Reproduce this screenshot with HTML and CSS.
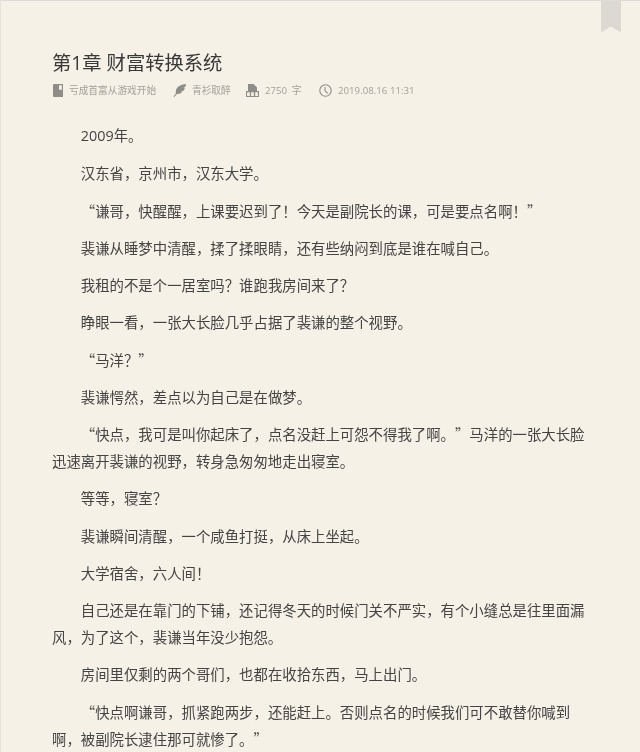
FILE: index.html
```html
<!DOCTYPE html>
<html lang="zh">
<head>
<meta charset="utf-8">
<title>第1章 财富转换系统</title>
<link rel="stylesheet" href="styles.css">
</head>
<body>
<main class="page">
  <svg class="bookmark" viewBox="0 0 20 32" aria-hidden="true"><path d="M0 0H20V32L10 26L0 32Z"/></svg>
  <h1 class="title">第1章 财富转换系统</h1>
  <div class="meta">
    <span class="meta-item meta-book">
      <svg class="icon" viewBox="0 0 10 13" aria-hidden="true"><path class="solid" fill-rule="evenodd" d="M1 0H10V13H1A1 1 0 0 1 0 12V1A1 1 0 0 1 1 0ZM6 1.2V5.8H8.8V1.2Z"/></svg>
      <span>亏成首富从游戏开始</span>
    </span>
    <span class="meta-item meta-author">
      <svg class="icon" viewBox="0 0 13 13" aria-hidden="true"><path class="solid" d="M13 0C8.5 .6 4.6 2 3.2 5.4C2.7 6.8 2.7 8.2 3 9.2L.4 12.5L1.2 13L3.9 9.9C5.6 10.2 7.6 9.7 9 8.3L7.5 7.9L10.1 7C11 6 11.5 5 11.9 3.8L10.2 3.8L12.4 2.7C12.7 1.9 12.9 1 13 0Z"/></svg>
      <span>青衫取醉</span>
    </span>
    <span class="meta-item meta-count">
      <svg class="icon" viewBox="0 0 13 13" aria-hidden="true"><path class="solid" fill-rule="evenodd" d="M2 0H7.6L11 3.4V7H13V13H0V7H2ZM1.1 8.3V11.9H3.8V8.3ZM5.1 8.3V11.9H7.8V8.3ZM9.2 8.3V11.9H11.9V8.3Z"/></svg>
      <span>2750 字</span>
    </span>
    <span class="meta-item">
      <svg class="icon" viewBox="0 0 13 13" aria-hidden="true"><g class="line"><circle cx="6.5" cy="6.5" r="5.7"/><path d="M6 3V6.8L8.8 9.4"/></g></svg>
      <span>2019.08.16 11:31</span>
    </span>
  </div>
  <article class="content">
    <p><span class="num">2009</span>年。</p>
    <p>汉东省，京州市，汉东大学。</p>
    <p>“谦哥，快醒醒，上课要迟到了！今天是副院长的课，可是要点名啊！”</p>
    <p>裴谦从睡梦中清醒，揉了揉眼睛，还有些纳闷到底是谁在喊自己。</p>
    <p>我租的不是个一居室吗？谁跑我房间来了？</p>
    <p>睁眼一看，一张大长脸几乎占据了裴谦的整个视野。</p>
    <p>“马洋？”</p>
    <p>裴谦愕然，差点以为自己是在做梦。</p>
    <p>“快点，我可是叫你起床了，点名没赶上可怨不得我了啊。”马洋的一张大长脸迅速离开裴谦的视野，转身急匆匆地走出寝室。</p>
    <p>等等，寝室？</p>
    <p>裴谦瞬间清醒，一个咸鱼打挺，从床上坐起。</p>
    <p>大学宿舍，六人间！</p>
    <p>自己还是在靠门的下铺，还记得冬天的时候门关不严实，有个小缝总是往里面漏风，为了这个，裴谦当年没少抱怨。</p>
    <p>房间里仅剩的两个哥们，也都在收拾东西，马上出门。</p>
    <p>“快点啊谦哥，抓紧跑两步，还能赶上。否则点名的时候我们可不敢替你喊到啊，被副院长逮住那可就惨了。”</p>
  </article>
</main>
</body>
</html>
```
FILE: styles.css
```css
html, body {
  margin: 0;
  height: 100%;
}
body {
  background: #f5f1e7;
  overflow: hidden;
  font-family: "Noto Sans CJK SC", "Liberation Sans", sans-serif;
  text-spacing-trim: space-all;
}
.page {
  position: relative;
  height: 752px;
  box-sizing: border-box;
  padding: 50px 52px 0 51px;
  background: #f5f1e7;
  border-top: 1px solid #dedcd8;
  border-left: 1px solid #e6e3dd;
  overflow: hidden;
  filter: blur(0.3px);
}
.bookmark {
  position: absolute;
  top: -1px;
  right: 19px;
  width: 20px;
  height: 33px;
  fill: #dcd9d3;
}
.title {
  margin: 0;
  font-family: "Open Sans", "Noto Sans CJK SC", sans-serif;
  font-size: 19.3px;
  line-height: 24px;
  font-weight: 400;
  color: #383838;
}
.meta {
  display: flex;
  align-items: center;
  margin-top: 5px;
  height: 20px;
  font-family: "Open Sans", "Noto Sans CJK SC", sans-serif;
  font-size: 9.7px;
  color: #a3a09a;
}
.meta-item {
  display: flex;
  align-items: center;
  gap: 6px;
  white-space: nowrap;
}
.meta-book { width: 121px; }
.meta-author { width: 73px; }
.meta-count {
  width: 73px;
  word-spacing: 2px;
}
.icon {
  flex: none;
  width: 13px;
  height: 13px;
}
.meta-book .icon {
  width: 10px;
  margin-left: 1px;
}
.solid { fill: #8f8d88; }
.line {
  fill: none;
  stroke: #8f8d88;
  stroke-width: 1.1;
}
.content {
  margin-top: 21px;
  font-size: 14.4px;
  line-height: 27px;
  color: #444;
}
.num { font-family: "Open Sans", sans-serif; }
.content p {
  margin: 0 0 10.25px;
  text-indent: 2em;
}
```
